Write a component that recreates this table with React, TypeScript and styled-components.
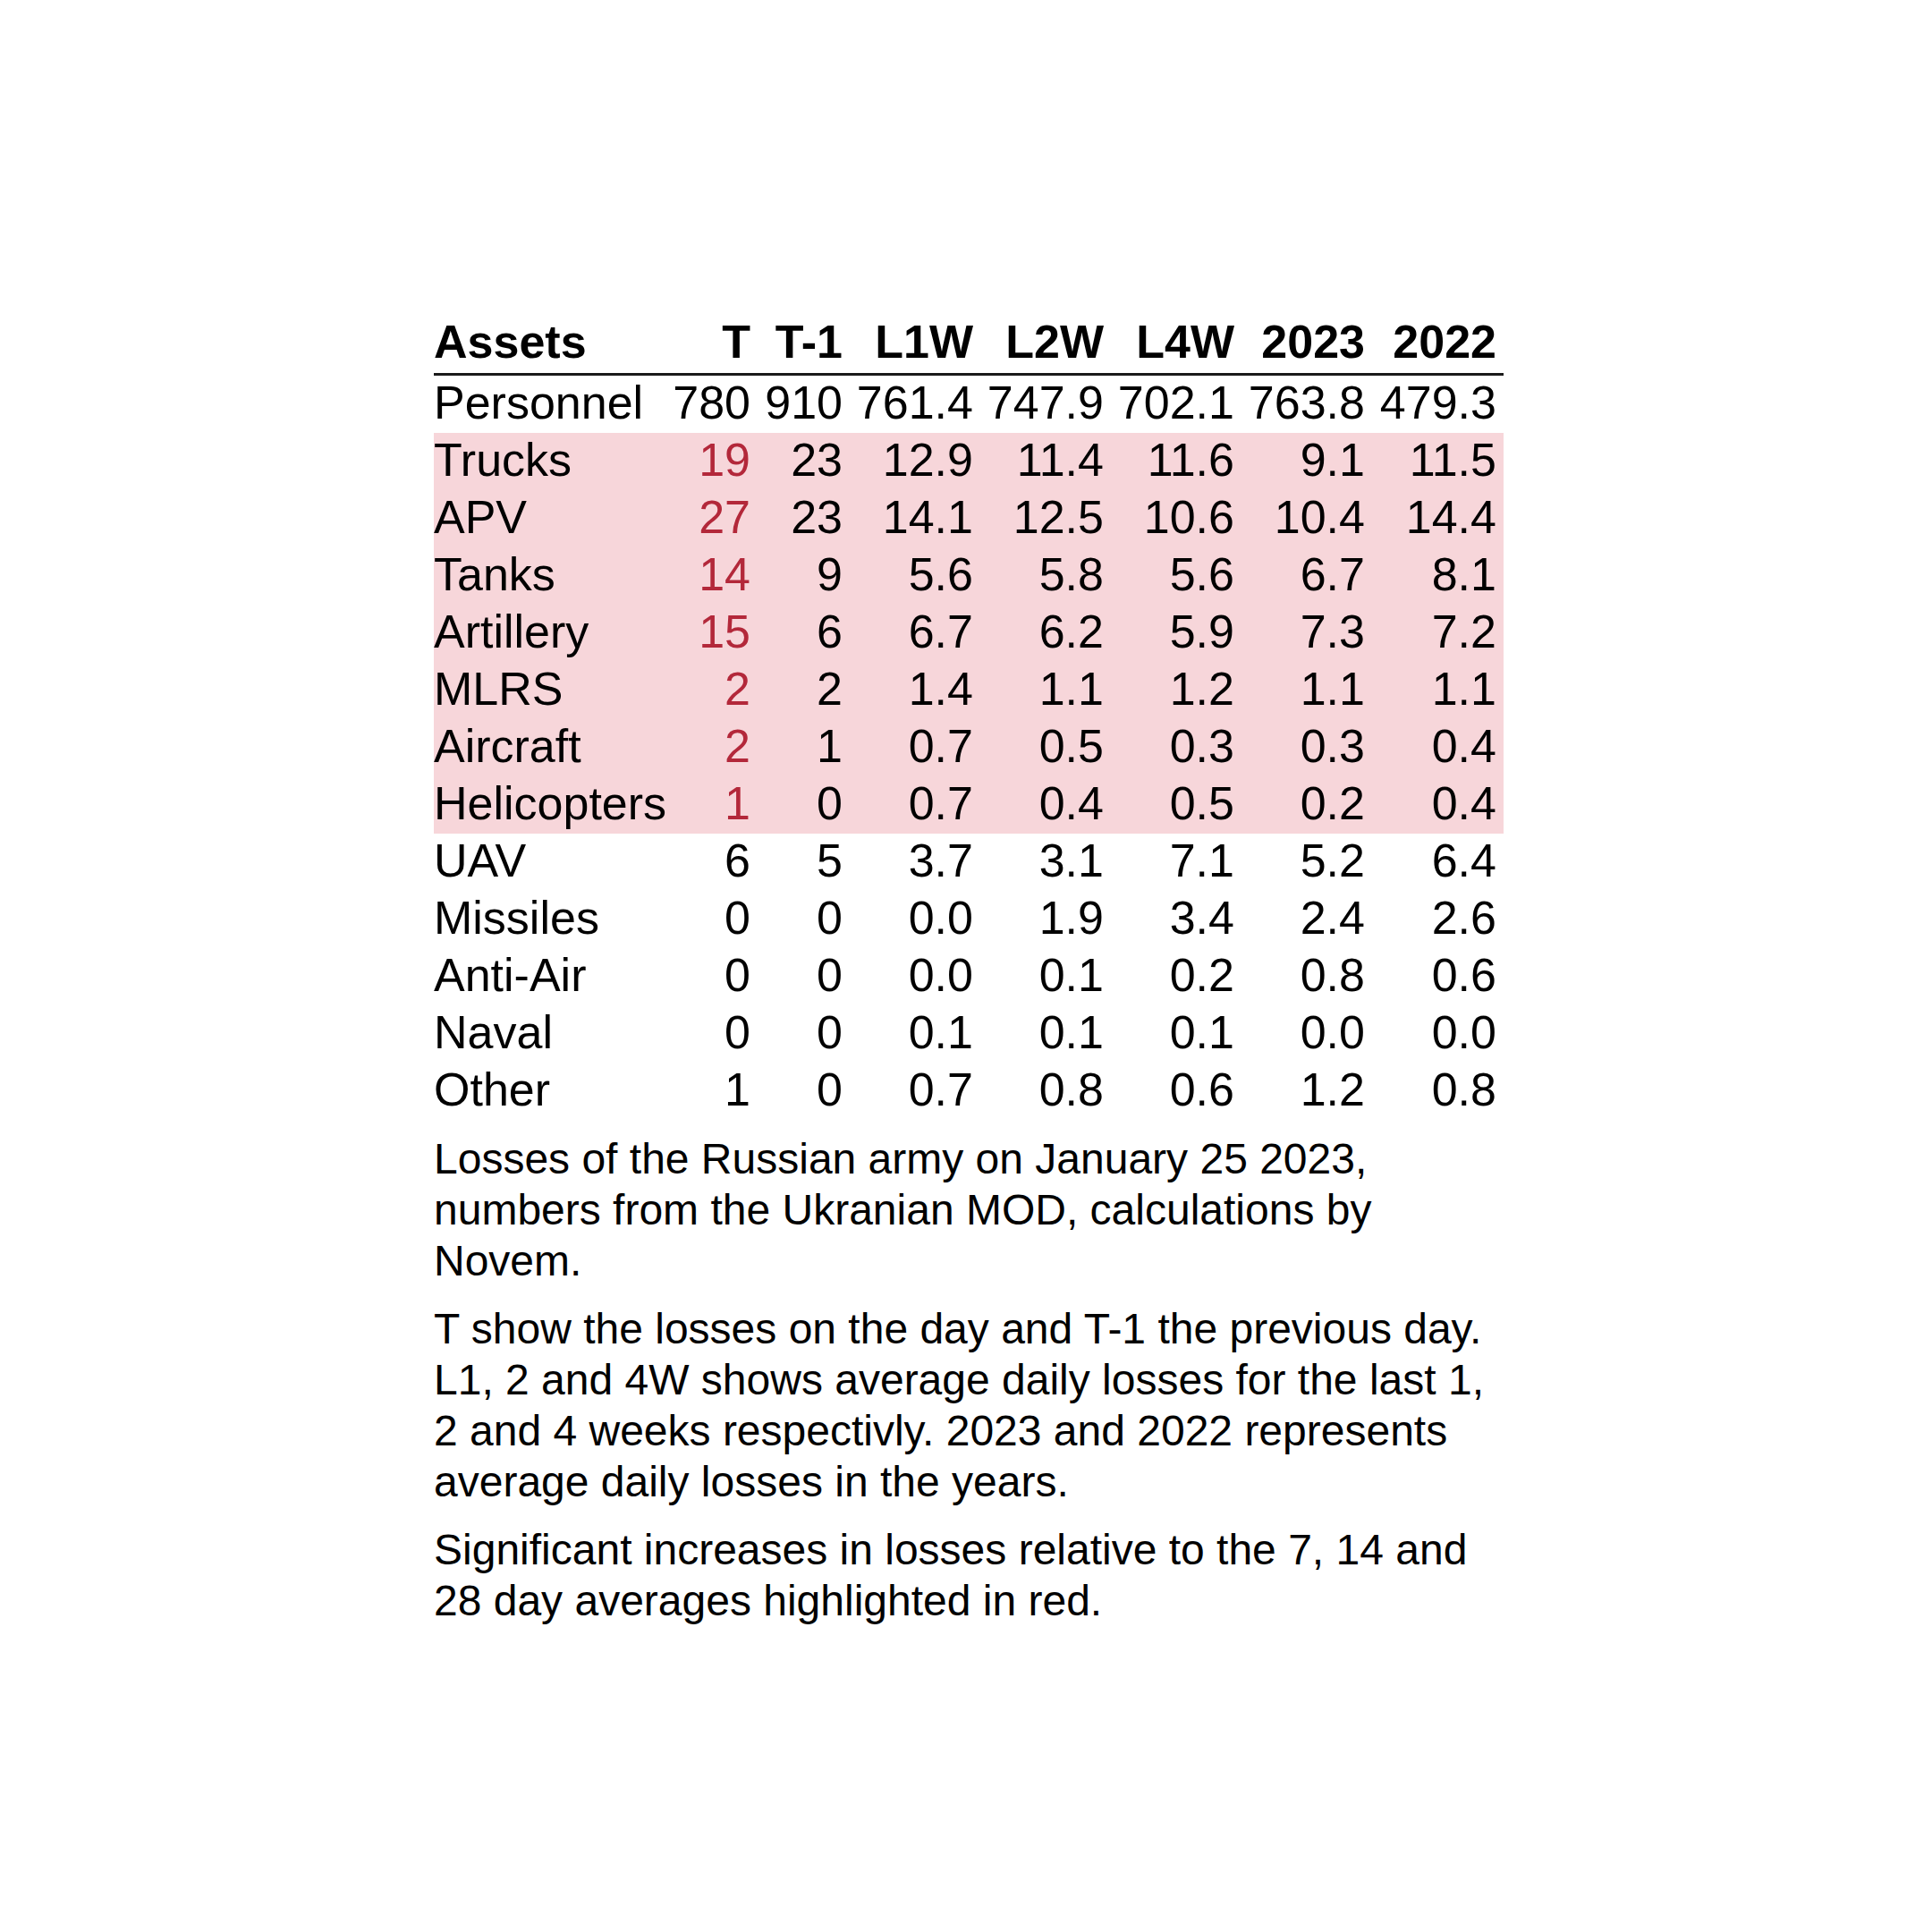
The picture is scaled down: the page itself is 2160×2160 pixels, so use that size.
import React from "react";
import styled, { createGlobalStyle } from "styled-components";

interface AssetRow {
  name: string;
  values: string[];
  highlight?: boolean;
  redT?: boolean;
}

const COLUMNS = ["T", "T-1", "L1W", "L2W", "L4W", "2023", "2022"];

const ROWS: AssetRow[] = [
  { name: "Personnel", values: ["780", "910", "761.4", "747.9", "702.1", "763.8", "479.3"] },
  { name: "Trucks", values: ["19", "23", "12.9", "11.4", "11.6", "9.1", "11.5"], highlight: true, redT: true },
  { name: "APV", values: ["27", "23", "14.1", "12.5", "10.6", "10.4", "14.4"], highlight: true, redT: true },
  { name: "Tanks", values: ["14", "9", "5.6", "5.8", "5.6", "6.7", "8.1"], highlight: true, redT: true },
  { name: "Artillery", values: ["15", "6", "6.7", "6.2", "5.9", "7.3", "7.2"], highlight: true, redT: true },
  { name: "MLRS", values: ["2", "2", "1.4", "1.1", "1.2", "1.1", "1.1"], highlight: true, redT: true },
  { name: "Aircraft", values: ["2", "1", "0.7", "0.5", "0.3", "0.3", "0.4"], highlight: true, redT: true },
  { name: "Helicopters", values: ["1", "0", "0.7", "0.4", "0.5", "0.2", "0.4"], highlight: true, redT: true },
  { name: "UAV", values: ["6", "5", "3.7", "3.1", "7.1", "5.2", "6.4"] },
  { name: "Missiles", values: ["0", "0", "0.0", "1.9", "3.4", "2.4", "2.6"] },
  { name: "Anti-Air", values: ["0", "0", "0.0", "0.1", "0.2", "0.8", "0.6"] },
  { name: "Naval", values: ["0", "0", "0.1", "0.1", "0.1", "0.0", "0.0"] },
  { name: "Other", values: ["1", "0", "0.7", "0.8", "0.6", "1.2", "0.8"] },
];

const GlobalStyle = createGlobalStyle`
  html, body {
    margin: 0;
    padding: 0;
    background: #ffffff;
  }
  body {
    font-family: "Liberation Sans", Arial, sans-serif;
    color: #000000;
  }
`;

const Page = styled.div`
  width: 2160px;
  height: 2160px;
  display: flex;
  padding: 350px 0 0 485px;
  box-sizing: border-box;
`;

const Figure = styled.div`
  width: 1196px;
  display: flex;
  flex-direction: column;
`;

const Grid = `
  display: grid;
  grid-template-columns: 259px 95px 103px 146px 146px 146px 146px 147px;
  padding-right: 8px;
`;

const HeaderRow = styled.div`
  ${Grid}
  height: 70px;
  line-height: 64px;
  font-size: 52px;
  font-weight: 700;
  border-bottom: 3px solid #1a1a1a;
  box-sizing: border-box;
`;

const Row = styled.div<{ $highlight?: boolean }>`
  ${Grid}
  height: 64px;
  line-height: 60px;
  font-size: 52px;
  background: ${(p) => (p.$highlight ? "#f7d6da" : "transparent")};
`;

const Label = styled.div`
  text-align: left;
  white-space: nowrap;
`;

const Cell = styled.div<{ $red?: boolean }>`
  text-align: right;
  white-space: nowrap;
  color: ${(p) => (p.$red ? "#b3283a" : "#000000")};
`;

const Notes = styled.div`
  margin-top: 15px;
  display: flex;
  flex-direction: column;
  gap: 19px;
`;

const Note = styled.p`
  margin: 0;
  font-size: 48px;
  line-height: 57px;
`;

const App: React.FC = () => {
  return (
    <>
      <GlobalStyle />
      <Page>
        <Figure>
          <HeaderRow>
            <Label>Assets</Label>
            {COLUMNS.map((c) => (
              <Cell key={c}>{c}</Cell>
            ))}
          </HeaderRow>
          {ROWS.map((row) => (
            <Row key={row.name} $highlight={row.highlight}>
              <Label>{row.name}</Label>
              {row.values.map((v, i) => (
                <Cell key={i} $red={row.redT && i === 0}>
                  {v}
                </Cell>
              ))}
            </Row>
          ))}
          <Notes>
            <Note>
              Losses of the Russian army on January 25 2023, numbers from the
              Ukranian MOD, calculations by Novem.
            </Note>
            <Note>
              T show the losses on the day and T-1 the previous day. L1, 2 and
              4W shows average daily losses for the last 1, 2 and 4 weeks
              respectivly. 2023 and 2022 represents average daily losses in the
              years.
            </Note>
            <Note>
              Significant increases in losses relative to the 7, 14 and 28 day
              averages highlighted in red.
            </Note>
          </Notes>
        </Figure>
      </Page>
    </>
  );
};

export default App;
